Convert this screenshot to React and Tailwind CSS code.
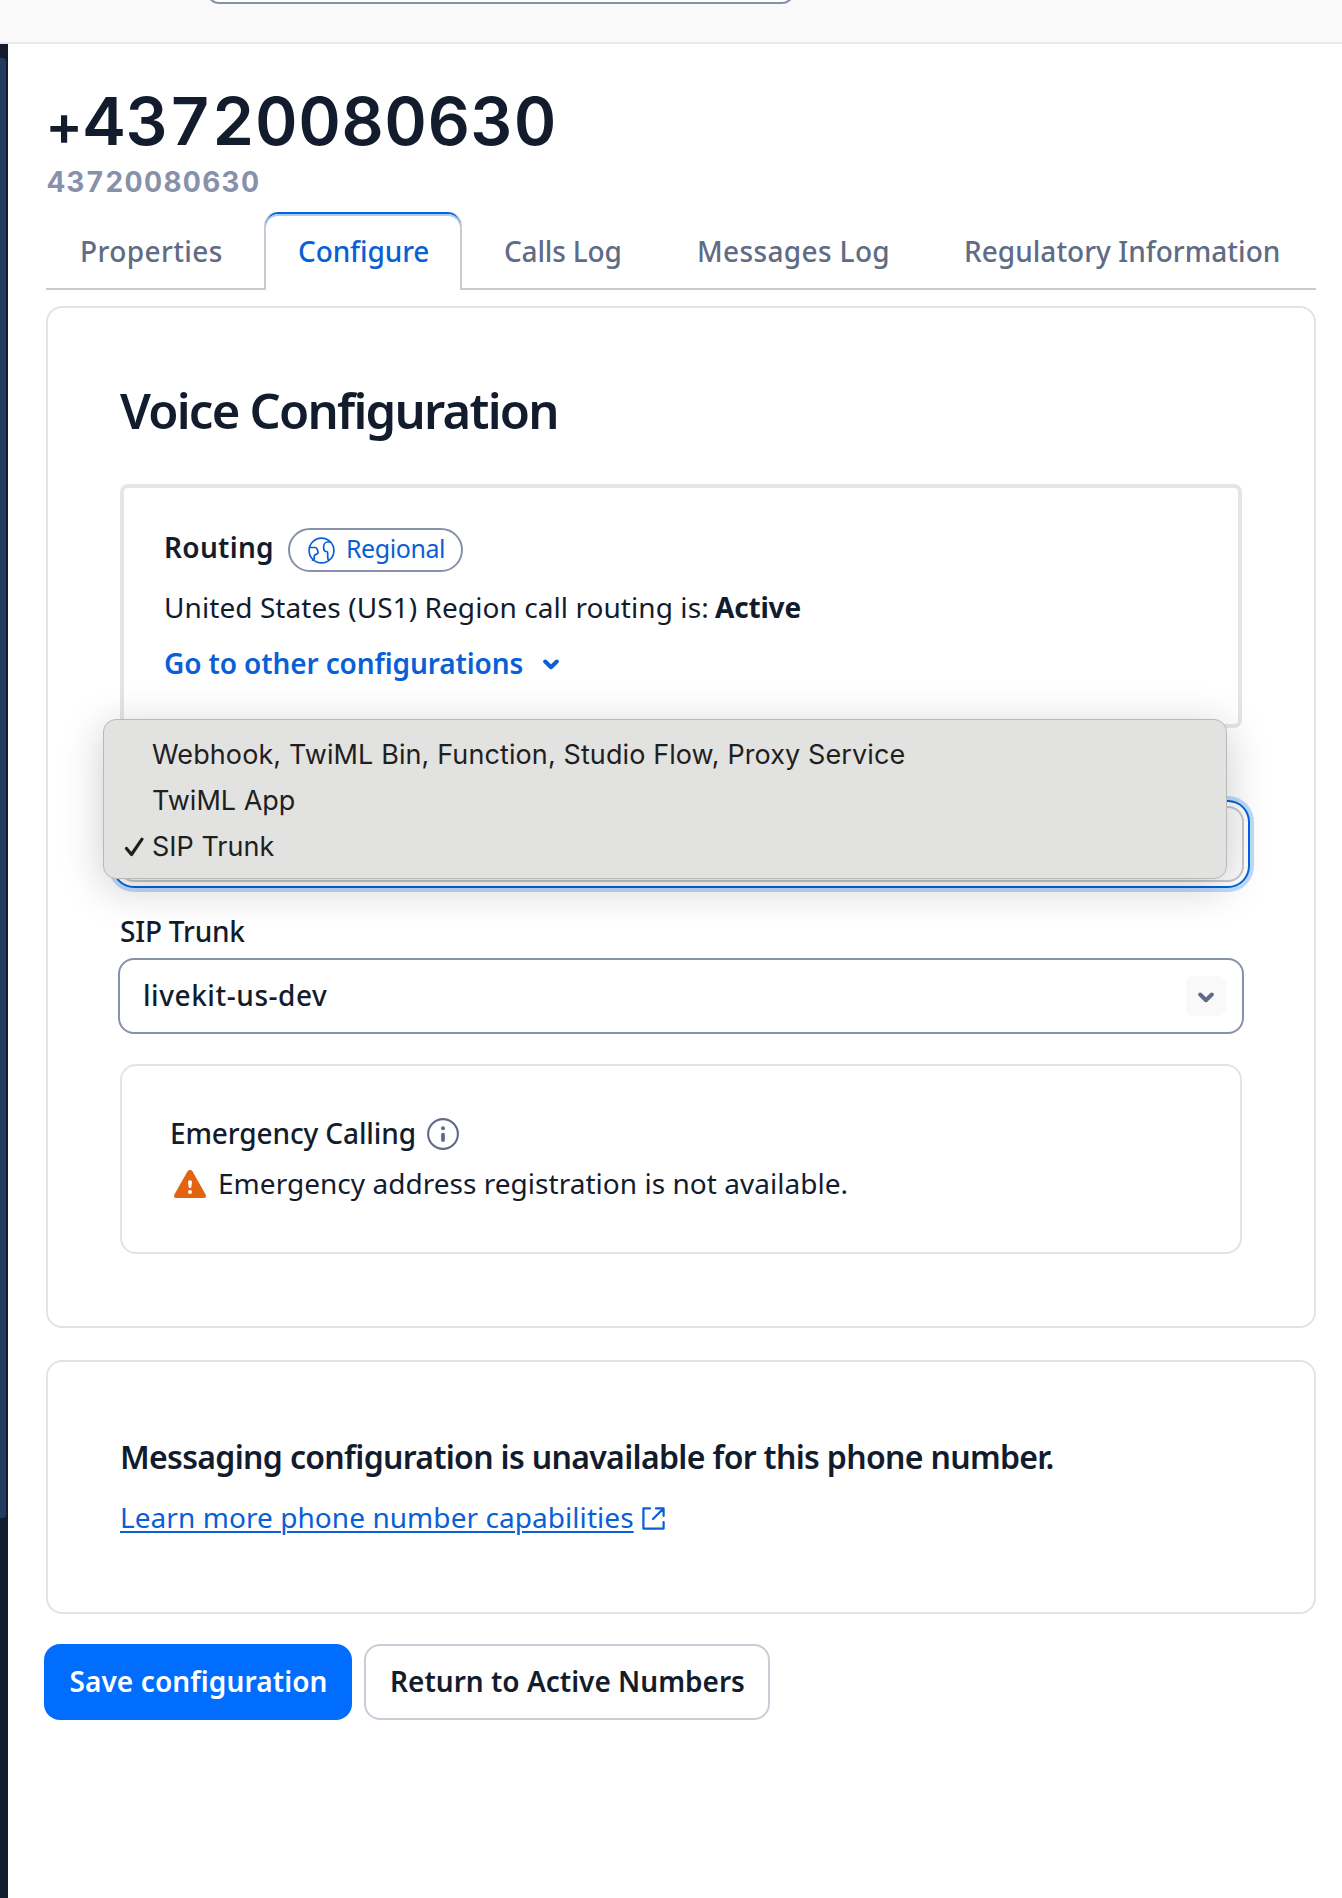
import React from "react";

const tabs = [
  { label: "Properties", box: "w-[218px] pl-[34px] tracking-[0.4px]" },
  { label: "Configure", active: true },
  { label: "Calls Log", box: "w-[193px] pl-[42px] tracking-[-0.17px]" },
  { label: "Messages Log", box: "w-[267px] pl-[42px] tracking-[0.36px]" },
  { label: "Regulatory Information", box: "flex-1 pl-[42px] tracking-[0.02px]" },
];

function Tab({ label, active, box }) {
  if (active) {
    return (
      <div className="w-[198px] h-[78px] rounded-t-[14px] border-x-2 border-[#cacbd2] bg-[#0263e0] pt-[2px] overflow-hidden">
        <div className="h-full rounded-t-[12px] bg-white pl-[32px] pt-[17px] leading-[40px] text-[#0a5fd6] tracking-[-0.11px] shadow-[inset_0_2px_0_#a9cbf8]">
          {label}
        </div>
      </div>
    );
  }
  return (
    <div className={`h-[78px] border-b-2 border-[#cacbd2] pt-[19px] leading-[40px] whitespace-nowrap ${box}`}>{label}</div>
  );
}

function Chevron({ className }) {
  return (
    <svg className={className} viewBox="0 0 16 11" fill="none" stroke="currentColor" strokeWidth="4" strokeLinecap="round" strokeLinejoin="round">
      <path d="M2.2 2.5 8 8.2l5.8-5.7" />
    </svg>
  );
}

function Globe() {
  return (
    <svg className="w-[27px] h-[27px]" viewBox="0 0 27 27" fill="none" stroke="#0a5fd6" strokeWidth="1.7" strokeLinejoin="round" strokeLinecap="round">
      <circle cx="13.5" cy="13.5" r="12.4" />
      <path d="M1.500 10.500H6.800c1.400 0 2 .7 2.400 1.800l.7 1.900c.4 1.300-.1 2.400-1.300 2.900l-1.200.5c-.9.400-1.200 1-1.200 1.900v1.800c0 1-.7 1.800-1.700 1.800" />
      <path d="M22.500 5h-2.700c-2.400 0-4.200 2.300-4.200 5.200 0 2.600.8 4.300 2.700 4.300.9 0 1.400.5 1.400 1.500v4.500c0 1.300.4 2.200 1.300 2.600" />
    </svg>
  );
}

function InfoIcon() {
  return (
    <svg className="w-8 h-8" viewBox="0 0 32 32" fill="none">
      <circle cx="16" cy="16" r="14.9" stroke="#606b85" strokeWidth="2.1" />
      <circle cx="16" cy="10.2" r="2" fill="#606b85" />
      <path d="M16 16.6v5.4" stroke="#606b85" strokeWidth="3.8" strokeLinecap="round" />
    </svg>
  );
}

function WarningIcon() {
  return (
    <svg className="w-8 h-7" viewBox="0 0 32 28">
      <path d="M13.4 1.5c1.2-2 4-2 5.2 0l13 23c1 1.8 0 3.5-2 3.5H2.400c-2 0-3-1.700-2-3.500z" fill="#e36410" />
      <path d="M14 12.2c0-1.200.8-1.900 2-1.900s2 .7 2 1.900l-.7 4.700c-.1.800-.6 1.200-1.300 1.200s-1.200-.4-1.300-1.200z" fill="#fff" />
      <circle cx="16" cy="22" r="2" fill="#fff" />
    </svg>
  );
}

function ExternalIcon() {
  return (
    <svg className="w-[23px] h-[23px]" viewBox="0 0 23 23" fill="none" stroke="#0a5fd6" strokeWidth="2.2" strokeLinecap="round" strokeLinejoin="round">
      <path d="M8 1.400H1.400v20.200h20.200V15M14 1.400h7.600V9M21 2 11 12" />
    </svg>
  );
}

export default function App() {
  return (
    <div className="w-[1342px] h-[1898px] overflow-hidden bg-white text-[#121c2d] text-[28px] leading-[40px] font-['Noto_Sans',sans-serif] flex flex-col">
      <header className="h-11 shrink-0 bg-[#f9f9fa] border-b-2 border-[#e9e9eb] pl-[207px] overflow-hidden">
        <div className="-mt-4 w-[587px] h-5 rounded-b-[12px] border-2 border-t-0 border-[#8891aa] bg-white" />
      </header>

      <div className="flex flex-1">
        <aside className="w-2 shrink-0 bg-[#121c2d] pt-[14px] pr-[2px]">
          <div className="h-[1460px] rounded-r-[4px] bg-[#233a61]" />
        </aside>

        <main className="w-[1270px] ml-[38px]">
          <h1 className="mt-[35px] h-[84px] leading-[84px] text-[66px] font-semibold tracking-[0.4px] tabular-nums font-['Inter',sans-serif]">
            <span className="text-[56px]">+</span>43720080630
          </h1>
          <p className="mt-[-1px] ml-[1px] h-[40px] font-bold text-[#8891aa] tracking-[1.3px] tabular-nums font-['Inter',sans-serif]">43720080630</p>

          <nav className="mt-[10px] flex font-medium text-[#606b85]">
            {tabs.map((t) => (
              <Tab key={t.label} {...t} />
            ))}
          </nav>

          <section className="mt-4 h-[1022px] rounded-[16px] border-2 border-[#e1e3ea] px-[72px]">
            <h2 className="mt-[70px] h-[64px] leading-[64px] text-[49px] font-semibold tracking-[-1.75px]">Voice Configuration</h2>

            <div className="relative mt-[42px] h-[244px] rounded-[8px] border-4 border-[#e5e5e7] pl-[40px]">
              <div className="mt-[39px] flex h-[46px] items-start">
                <span className="font-semibold tracking-[0.3px]">Routing</span>
                <span className="ml-[14px] mt-[1px] flex h-[44px] w-[175px] items-center gap-[11px] rounded-full border-2 border-[#8891aa] pl-[18px] text-[25px] tracking-[-0.43px] text-[#0a5fd6]">
                  <Globe />
                  <span className="-mt-[4px]">Regional</span>
                </span>
              </div>
              <p className="mt-[14px] whitespace-nowrap tracking-[0.07px]">
                United States (US1) Region call routing is: <b className="-ml-[1px] font-bold tracking-[-0.2px]">Active</b>
              </p>
              <div className="mt-4 flex items-center text-[#0a5fd6]">
                <span className="font-semibold tracking-[-0.12px]">Go to other configurations</span>
                <Chevron className="ml-[20px] mt-[3px] h-[11px] w-4" />
              </div>

              <ul className="absolute left-[-21px] top-[231px] z-10 h-[160px] w-[1124px] rounded-[13px] border border-[#b9b9b7] bg-[#e2e2e0] pt-[12px] font-['Inter',sans-serif] text-[27px] leading-[46px] text-[#1f1f1f] shadow-[0_8px_44px_rgba(0,0,0,0.2)]">
                <li className="pl-[48px] tracking-[0.1px] whitespace-nowrap">Webhook, TwiML Bin, Function, Studio Flow, Proxy Service</li>
                <li className="pl-[48px]">TwiML App</li>
                <li className="flex items-center pl-[20px]">
                  <svg className="mr-[7px] h-5 w-[21px]" viewBox="0 0 21 20" fill="none" stroke="currentColor" strokeWidth="3.200" strokeLinecap="round" strokeLinejoin="round">
                    <path d="m2.500 11.500 5 6L18 2.200" />
                  </svg>
                  SIP Trunk
                </li>
              </ul>
            </div>

            <div className="mt-[78px] -ml-[2px] h-[76px] w-[1126px] rounded-[16px] border-2 border-[#c6c6cb] bg-[#fcfcfd] shadow-[0_0_0_4px_#fff,0_0_0_6px_#0263e0,0_0_0_10px_#c0dcfa]" />

            <label className="mt-[29px] block h-[40px] font-medium tracking-[-0.2px]">SIP Trunk</label>
            <div className="mt-[7px] -ml-[2px] flex h-[76px] w-[1126px] items-center justify-between rounded-[16px] border-2 border-[#8891aa] pl-[23px] pr-4">
              <span className="-mt-[3px] font-medium tracking-[0.55px]">livekit-us-dev</span>
              <span className="flex h-10 w-10 items-center justify-center rounded-[8px] bg-[#f9f9fa] text-[#606b85]">
                <Chevron className="mt-[2px] h-[11px] w-4" />
              </span>
            </div>

            <div className="mt-[30px] h-[190px] rounded-[16px] border-2 border-[#e1e3ea] pl-[48px] pt-[47px]">
              <div className="flex items-center gap-[11px]">
                <span className="font-medium tracking-[-0.12px]">Emergency Calling</span>
                <span className="mt-[2px]">
                  <InfoIcon />
                </span>
              </div>
              <div className="mt-[10px] flex items-center gap-[12px] pl-[4px]">
                <span className="mt-[2px]">
                  <WarningIcon />
                </span>
                <span className="tracking-[0.03px]">Emergency address registration is not available.</span>
              </div>
            </div>
          </section>

          <section className="mt-8 h-[254px] rounded-[16px] border-2 border-[#e1e3ea] px-[72px] pt-[75px]">
            <h3 className="text-[32px] font-semibold tracking-[-0.67px] whitespace-nowrap">Messaging configuration is unavailable for this phone number.</h3>
            <div className="mt-[20px] flex items-center">
              <a className="text-[#0a5fd6] underline decoration-2 underline-offset-[3px] tracking-[0.06px]">Learn more phone number capabilities</a>
              <span className="ml-[8px] mt-[3px]">
                <ExternalIcon />
              </span>
            </div>
          </section>

          <div className="mt-[30px] -ml-[2px] flex gap-3 font-semibold">
            <button className="h-[76px] w-[308px] rounded-[16px] bg-[#006dff] pb-[2px] pl-[1px] text-white tracking-[0.12px]">Save configuration</button>
            <button className="h-[76px] w-[406px] rounded-[16px] border-2 border-[#cacdd8] pb-[2px] pl-[1px]">Return to Active Numbers</button>
          </div>
        </main>
      </div>
    </div>
  );
}
